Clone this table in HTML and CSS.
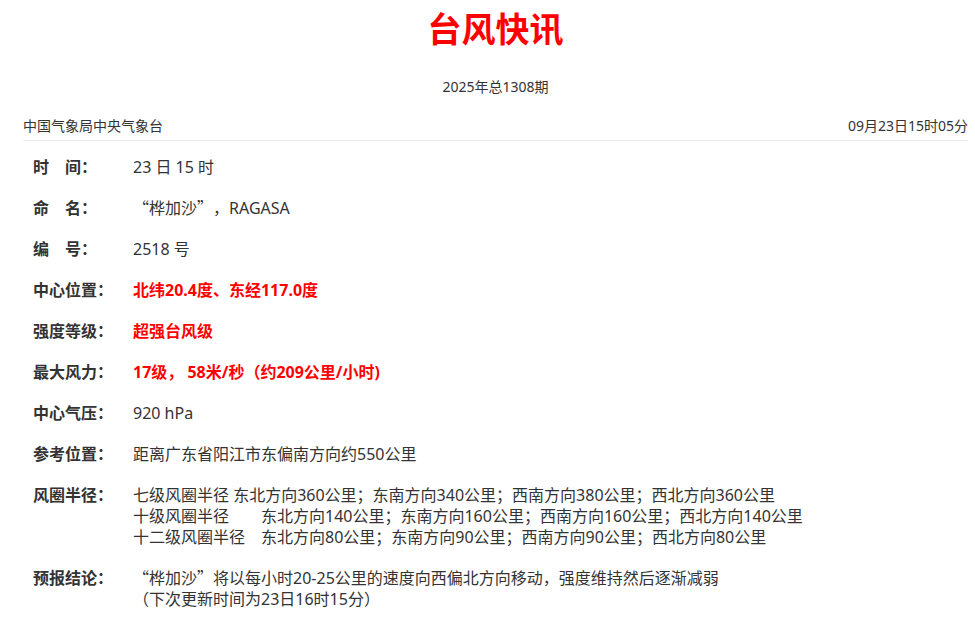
FILE: index.html
```html
<!DOCTYPE html>
<html lang="zh-CN">
	<head>
		<meta charset="utf-8" />
		<meta name="viewport" content="width=device-width, initial-scale=1.0" />
		<title>台风快讯</title>
		<link rel="stylesheet" href="styles.css">
	</head>
	<body>
		<div class="page">
			<h1 class="title">台风快讯</h1>
			<div class="issue">2025年总1308期</div>

			<div class="header">
				<span>中国气象局中央气象台</span>
				<span>09月23日15时05分</span>
			</div>

			<div class="info">
				<div class="row">
					<div class="label">时　间：</div>
					<div class="value">23 日 15 时</div>
				</div>
				<div class="row">
					<div class="label">命　名：</div>
					<div class="value"><span class="cjk">“</span>桦加沙<span class="cjk">”，</span>RAGASA</div>
				</div>
				<div class="row">
					<div class="label">编　号：</div>
					<div class="value">2518 号</div>
				</div>
				<div class="row">
					<div class="label">中心位置：</div>
					<div class="value red">北纬20.4度、东经117.0度</div>
				</div>
				<div class="row">
					<div class="label">强度等级：</div>
					<div class="value red">超强台风级</div>
				</div>
				<div class="row">
					<div class="label">最大风力：</div>
					<div class="value red">17级， 58米/秒（约209公里/小时)</div>
				</div>
				<div class="row">
					<div class="label">中心气压：</div>
					<div class="value">920 hPa</div>
				</div>
				<div class="row">
					<div class="label">参考位置：</div>
					<div class="value">距离广东省阳江市东偏南方向约550公里</div>
				</div>
				<div class="row">
					<div class="label">风圈半径：</div>
					<div class="value multi">
						<div class="line">七级风圈半径 东北方向360公里；东南方向340公里；西南方向380公里；西北方向360公里</div>
						<div class="line"><span class="level">十级风圈半径</span>东北方向140公里；东南方向160公里；西南方向160公里；西北方向140公里</div>
						<div class="line"><span class="level">十二级风圈半径</span>东北方向80公里；东南方向90公里；西南方向90公里；西北方向80公里</div>
					</div>
				</div>
				<div class="row">
					<div class="label">预报结论：</div>
					<div class="value multi">
						<div class="line"><span class="cjk">“</span>桦加沙<span class="cjk">”</span>将以每小时20-25公里的速度向西偏北方向移动，强度维持然后逐渐减弱</div>
						<div class="line">（下次更新时间为23日16时15分）</div>
					</div>
				</div>
			</div>
		</div>
	</body>
</html>
```

FILE: styles.css
```css
body {
	margin: 0;
	font-family: "Noto Sans", "Noto Sans CJK SC", sans-serif;
	color: #333;
	background-color: #fff;
	text-spacing-trim: space-all;
}

.page {
	padding: 0 7px 0 23px;
}

.title {
	margin: 0;
	padding-top: 8px;
	font-size: 34px;
	line-height: 40px;
	text-align: center;
	color: #ff0000;
	font-family: "Noto Sans CJK SC", sans-serif;
}

.issue {
	margin-top: 29px;
	font-size: 14px;
	line-height: 20px;
	text-align: center;
}

.header {
	display: flex;
	justify-content: space-between;
	margin-top: 19px;
	padding-bottom: 4px;
	font-size: 14px;
	line-height: 20px;
	border-bottom: 1px solid #ececec;
}

/* fullwidth quotes from the CJK face */
.cjk {
	font-family: "Noto Sans CJK SC", sans-serif;
	line-height: 1;
}

.info {
	padding: 16px 0 0 10px;
	font-size: 16px;
	line-height: 21px;
}

.row {
	display: flex;
	margin-bottom: 20px;
}

.label {
	width: 100px;
	height: 21px;
	flex-shrink: 0;
	font-weight: bold;
}

.value,
.line {
	height: 21px;
	white-space: nowrap;
}

.value.multi {
	height: auto;
}

.value.red {
	color: #ff0000;
	font-weight: bold;
}

.level {
	display: inline-block;
	width: 128px;
}
```
